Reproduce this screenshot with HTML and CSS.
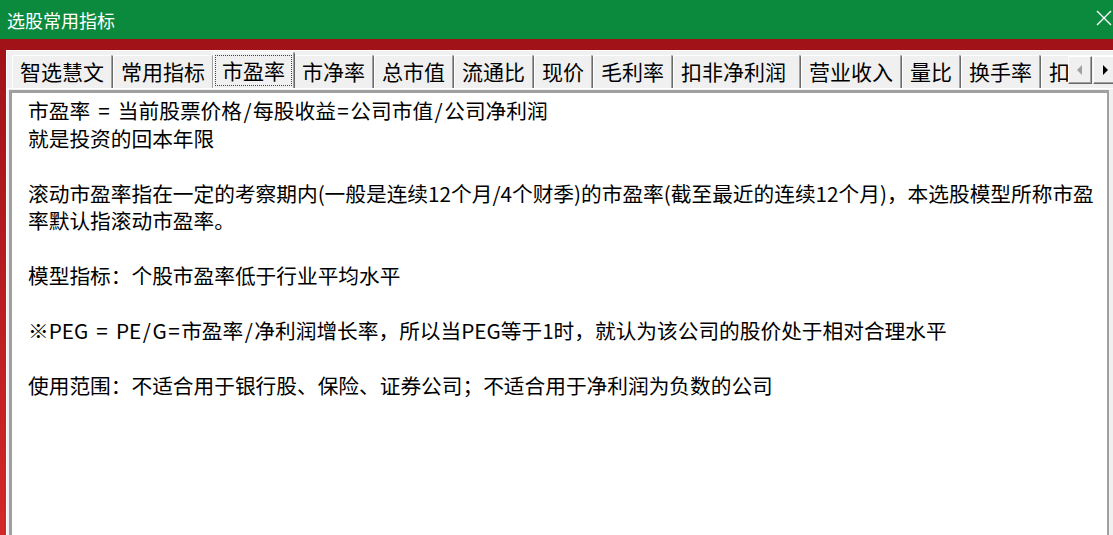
FILE: index.html
```html
<!DOCTYPE html>
<html lang="zh-CN">
<head>
  <meta charset="UTF-8">
  <title>选股常用指标</title>
  <link rel="stylesheet" href="styles.css">
</head>
<body>
  <div class="titlebar">
    <span class="title">选股常用指标</span>
    <svg class="close" width="16" height="16" viewBox="0 0 16 16">
      <path d="M1 1 L15 15 M15 1 L1 15" stroke="#fff" stroke-width="1.4" fill="none"/>
    </svg>
  </div>

  <div class="frame">
    <div class="tabstrip">
      <span class="tab">智选慧文</span>
      <span class="tab">常用指标</span>
      <span class="tab active"><span class="focus">市盈率</span></span>
      <span class="tab">市净率</span>
      <span class="tab">总市值</span>
      <span class="tab">流通比</span>
      <span class="tab">现价</span>
      <span class="tab">毛利率</span>
      <span class="tab wide">扣非净利润</span>
      <span class="tab">营业收入</span>
      <span class="tab">量比</span>
      <span class="tab">换手率</span>
      <span class="tab last">扣</span>

      <div class="scroller">
        <span class="scroll-btn">
          <svg width="8" height="10" viewBox="0 0 8 10"><polygon points="6,0 6,10 1,5" fill="#a0a0a0"/></svg>
        </span>
        <span class="scroll-btn">
          <svg width="8" height="10" viewBox="0 0 8 10"><polygon points="2,0 2,10 7,5" fill="#000"/></svg>
        </span>
      </div>
    </div>

    <div class="page">
      <div class="editbox">
        <p>市盈率 <span class="op">=</span> 当前股票价格<span class="op">/</span>每股收益<span class="op">=</span>公司市值<span class="op">/</span>公司净利润<br>就是投资的回本年限</p>
        <p>滚动市盈率指在一定的考察期内(一般是连续12个月/4个财季)的市盈率(截至最近的连续12个月)，本选股模型所称市盈<br>率默认指滚动市盈率。</p>
        <p>模型指标：个股市盈率低于行业平均水平</p>
        <p>※PEG <span class="op">=</span> PE<span class="op">/</span>G<span class="op">=</span>市盈率<span class="op">/</span>净利润增长率，所以当PEG等于1时，就认为该公司的股价处于相对合理水平</p>
        <p>使用范围：不适合用于银行股、保险、证券公司；不适合用于净利润为负数的公司</p>
      </div>
    </div>
  </div>
</body>
</html>
```

FILE: styles.css
```css
body {
  margin: 0;
  width: 1113px;
  height: 535px;
  overflow: hidden;
  font-family: "Microsoft YaHei", "Noto Sans CJK SC", sans-serif;
  background: linear-gradient(#9b1016, #d22828);
}

.titlebar {
  position: relative;
  height: 39px;
  background-color: #0b8a3e;
  color: #fff;
  display: flex;
  align-items: center;
  padding-left: 7px;
  font-size: 18px;
}

.close {
  position: absolute;
  right: 1px;
  top: 10px;
}

.frame {
  margin: 11px 0 0 6px;
  height: 485px;
  background-color: #f0f0f0;
  border-left: 1px solid #fff;
  border-top: 1px solid #fff;
}

/* tab strip */
.tabstrip {
  position: relative;
  height: 37px;
  display: flex;
  align-items: flex-end;
  padding-left: 5px;
  overflow: hidden;
  white-space: nowrap;
}

.tab {
  flex: 0 0 auto;
  height: 33px;
  line-height: 33px;
  padding: 0 8px;
  font-size: 21px;
  color: #000;
  background-color: #f0f0f0;
  border-right: 1px solid #696969;
  box-shadow: inset 1px 1px #fff, inset -1px 0 #a0a0a0;
  border-radius: 2px 2px 0 0;
}

.tab.wide {
  padding-right: 14px;
}

.tab.last {
  padding-right: 60px;
}

.tab.active {
  position: relative;
  z-index: 1;
  height: 36px;
  line-height: 36px;
  margin: 0 -1px;
  padding: 0 2px;
  display: flex;
  align-items: center;
}

.focus {
  display: block;
  height: 31px;
  line-height: 31px;
  padding: 0 7px;
  margin-top: 1px;
  outline: 1px dotted #444;
  outline-offset: -1px;
}

.scroller {
  position: absolute;
  right: -4px;
  top: 5px;
  display: flex;
  gap: 1px;
  z-index: 2;
}

.scroll-btn {
  width: 24px;
  height: 28px;
  box-sizing: border-box;
  background-color: #f0f0f0;
  border: 1px solid;
  border-color: #fff #696969 #696969 #fff;
  box-shadow: inset -1px -1px #a0a0a0;
  display: flex;
  align-items: center;
  justify-content: center;
}

/* tab page */
.page {
  border-top: 1px solid #fff;
  padding: 1px 0 0 2px;
}

.editbox {
  box-sizing: border-box;
  width: 1100px;
  height: 460px;
  background-color: #fff;
  border-style: solid;
  border-width: 3px 2px 0 3px;
  border-color: #a0a0a0;
  padding: 4px 0 0 16px;
  font-size: 20.7px;
  line-height: 27.5px;
  color: #000;
}

.editbox p {
  margin: 0 0 27.5px 0;
  white-space: nowrap;
  word-spacing: 2px;
}

.op {
  padding: 0 1.5px;
}
```
